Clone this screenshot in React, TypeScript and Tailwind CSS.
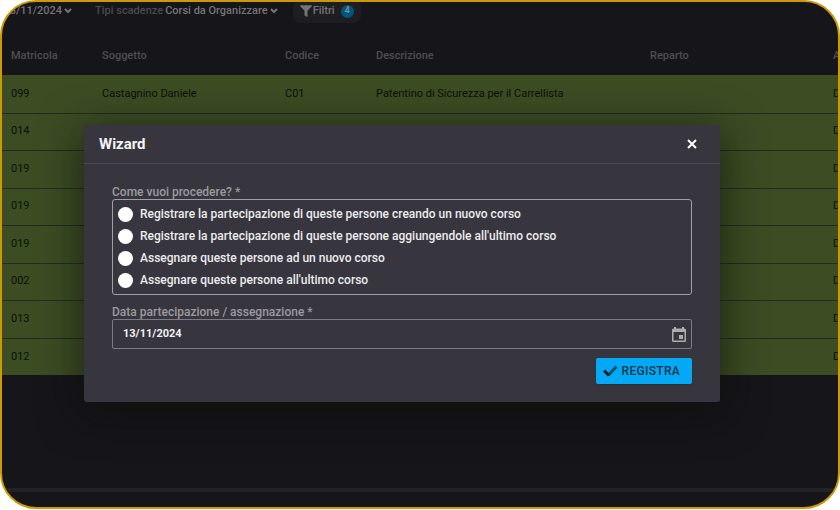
import { useState } from 'react'

const columns = [
  { name: 'Matricola', width: 'w-[91px]' },
  { name: 'Soggetto', width: 'w-[183px]' },
  { name: 'Codice', width: 'w-[91px]' },
  { name: 'Descrizione', width: 'w-[274px]' },
  { name: 'Reparto', width: 'w-[183px]' },
  { name: 'A', width: 'w-[183px]' },
]

const rows = [
  ['099', 'Castagnino Daniele', 'C01', 'Patentino di Sicurezza per il Carrellista', '', 'D'],
  ['014', '', '', '', '', 'D'],
  ['019', '', '', '', '', 'D'],
  ['019', '', '', '', '', 'D'],
  ['019', '', '', '', '', 'D'],
  ['002', '', '', '', '', 'D'],
  ['013', '', '', '', '', 'D'],
  ['012', '', '', '', '', 'D'],
]

const options = [
  'Registrare la partecipazione di queste persone creando un nuovo corso',
  "Registrare la partecipazione di queste persone aggiungendole all'ultimo corso",
  'Assegnare queste persone ad un nuovo corso',
  "Assegnare queste persone all'ultimo corso",
]

function Chevron() {
  return (
    <svg viewBox="0 0 8 6" className="h-[6px] w-2 shrink-0" fill="none" stroke="currentColor" strokeWidth="2">
      <path d="M1 1l3 3 3-3" />
    </svg>
  )
}

function Toolbar() {
  return (
    <div className="flex h-[21px] items-end overflow-hidden text-[11px] font-medium whitespace-nowrap text-[#747476]">
      <button className="flex h-6 w-[78px] shrink-0 items-center justify-end gap-[2px] rounded-lg pr-2">
        13/11/2024
        <Chevron />
      </button>
      <button className="ml-[9px] flex h-6 shrink-0 items-center gap-[2px] rounded-lg px-[6px]">
        <span className="text-[#4a4a4c]">Tipi scadenze</span>
        Corsi da Organizzare
        <Chevron />
      </button>
      <button className="ml-[9px] flex h-6 shrink-0 items-center rounded-lg bg-[#1e1e22] px-[7px]">
        <svg viewBox="0 0 12 12" className="mr-[1px] h-3 w-3" fill="currentColor">
          <path d="M0.6 0.3h10.8c.5 0 .7.5.4.9L7.5 5.7v5.5c0 .5-.5.8-.9.5L4.8 10.4a.7.7 0 0 1-.3-.6V5.7L.2 1.2C-.1.8.1.3.6.3z" />
        </svg>
        Filtri
        <span className="ml-[6px] flex h-[13px] w-[13px] items-center justify-center rounded-full bg-[#00557d] text-[9px] text-[#8d9194]">
          4
        </span>
      </button>
    </div>
  )
}

function DeadlinesTable() {
  return (
    <table className="w-full table-fixed border-collapse text-left text-[11px]">
      <thead>
        <tr className="h-[37px] text-[#4e4e51]">
          {columns.map((column) => (
            <th key={column.name} className={`${column.width} p-0 pl-[9px] font-medium`}>
              {column.name}
            </th>
          ))}
        </tr>
      </thead>
      <tbody>
        {rows.map((row, i) => (
          <tr
            key={i}
            className="border-b border-[#262a24] bg-[#3c4d24] text-[#0b0f07] last:border-b-0 odd:h-[38px] even:h-[37px]"
          >
            {row.map((cell, j) => (
              <td key={j} className="p-0 pl-[9px] whitespace-nowrap">
                {cell}
              </td>
            ))}
          </tr>
        ))}
      </tbody>
    </table>
  )
}

function WizardDialog() {
  const [choice, setChoice] = useState(-1)
  const [date, setDate] = useState('13/11/2024')

  return (
    <section
      role="dialog"
      aria-labelledby="wizard-title"
      className="flex-1 rounded-[3px] bg-[#37363f] shadow-[0_8px_40px_4px_rgba(12,14,6,0.6)]"
    >
      <header className="flex h-[39px] items-center justify-between border-b border-[#4b4a52] pr-[22px] pl-[15px]">
        <h2 id="wizard-title" className="text-[15px] leading-5 font-bold text-[#f4f4f5]">
          Wizard
        </h2>
        <button aria-label="Chiudi" className="flex h-3 w-3 items-center justify-center text-white">
          <svg viewBox="0 0 10 10" className="h-[10px] w-[10px]" stroke="currentColor" strokeWidth="2">
            <path d="M1 1l8 8M9 1l-8 8" />
          </svg>
        </button>
      </header>
      <form className="px-7 pt-[21px] pb-[18px]" onSubmit={(e) => e.preventDefault()}>
        <div id="choice-label" className="text-[12px] leading-[14px] font-medium text-[#9b9a9e]">
          Come vuoi procedere? *
        </div>
        <div
          role="radiogroup"
          aria-labelledby="choice-label"
          className="rounded-[3px] border border-[#a0a0a3] px-[5px] pt-[3px] pb-[3px]"
        >
          {options.map((option, i) => (
            <label
              key={option}
              className="flex h-[22px] items-center gap-[7px] text-[12px] font-medium text-[#ececed]"
            >
              <input
                type="radio"
                name="choice"
                checked={choice === i}
                onChange={() => setChoice(i)}
                className="h-[15px] w-[15px] shrink-0 appearance-none rounded-full bg-white checked:border-4 checked:border-[#03a9f4]"
              />
              {option}
            </label>
          ))}
        </div>
        <label htmlFor="date" className="mt-[10px] block text-[12px] leading-[14px] font-medium text-[#9b9a9e]">
          Data partecipazione / assegnazione *
        </label>
        <div className="flex h-[30px] items-center rounded-[2px] border border-[#7c7c82] pr-[5px] pl-[10px]">
          <input
            id="date"
            value={date}
            onChange={(e) => setDate(e.target.value)}
            className="min-w-0 flex-1 bg-transparent text-[11px] font-bold text-[#f0f0f1] outline-none"
          />
          <button type="button" aria-label="Apri calendario" className="text-[#adadb0]">
            <svg viewBox="0 0 14 15" className="h-[15px] w-[14px]" fill="currentColor">
              <path
                fillRule="evenodd"
                d="M2 0h2v1.5h6V0h2v1.5h.5A1.5 1.5 0 0 1 14 3v10.5a1.5 1.5 0 0 1-1.5 1.5h-11A1.5 1.5 0 0 1 0 13.5V3a1.5 1.5 0 0 1 1.5-1.5H2zM1.5 5v8.500h11V5zM7 8h4v4H7z"
              />
            </svg>
          </button>
        </div>
        <div className="mt-[9px] flex justify-end">
          <button
            type="submit"
            className="flex h-[26px] items-center gap-1 rounded-[2px] bg-[#03a9f4] pr-3 pl-[7px] text-[12px] font-medium tracking-wide text-[#0b3448] shadow-sm"
          >
            <svg viewBox="0 0 15 12" className="h-3 w-[15px]" fill="none" strokeWidth="3">
              <path d="M5.5 10L13.5 1.5" stroke="#075073" />
              <path d="M1 5.5l5 5" stroke="#061a24" />
            </svg>
            REGISTRA
          </button>
        </div>
      </form>
    </section>
  )
}

export default function App() {
  return (
    <div className="flex min-h-screen flex-col bg-white pb-px font-['Roboto',sans-serif]">
      <main className="relative flex flex-1 flex-col overflow-hidden rounded-[36px] border-2 border-[#cc9a06] bg-[#16151a]">
        <Toolbar />
        <div className="flex-1 pt-[15px]">
          <DeadlinesTable />
        </div>
        <div className="mb-[15px] h-1 bg-[#232227]" />
        <div className="absolute inset-0 flex items-start pt-[123px] pr-[118px] pl-[82px]">
          <WizardDialog />
        </div>
      </main>
    </div>
  )
}
